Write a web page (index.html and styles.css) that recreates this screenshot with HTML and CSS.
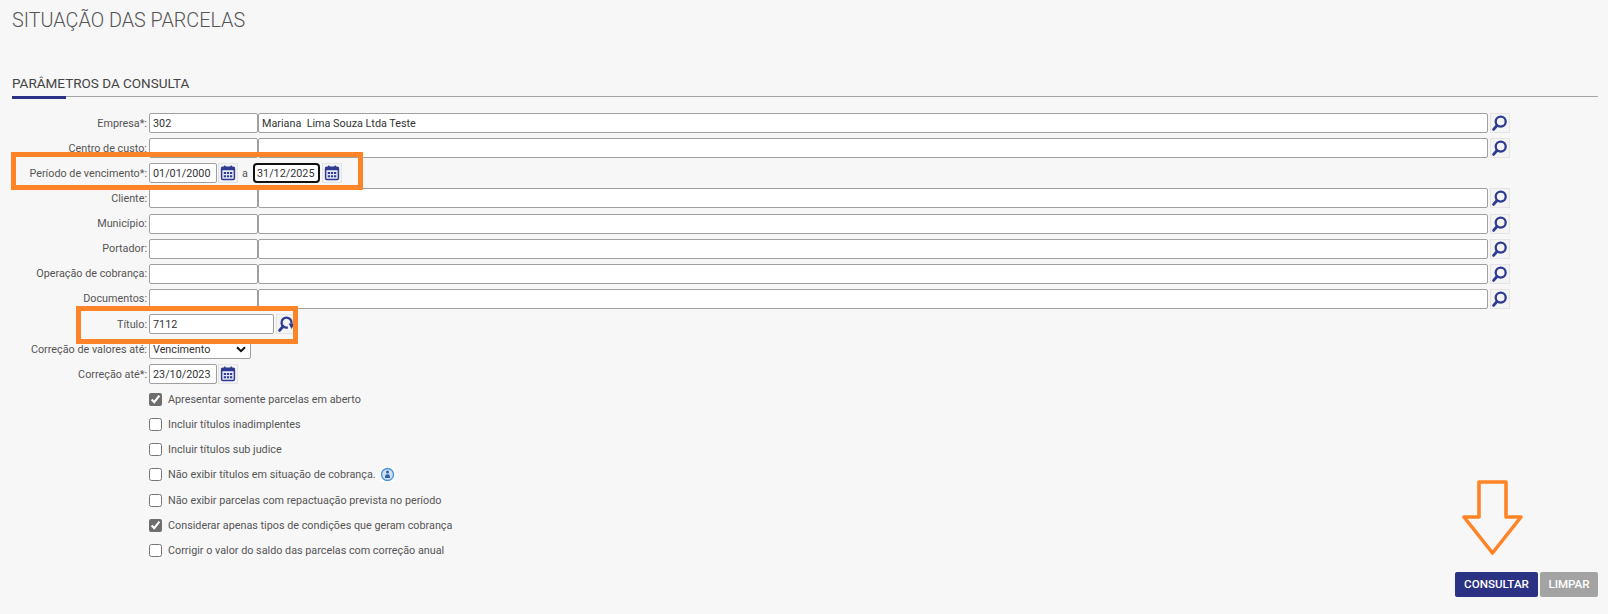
FILE: index.html
```html
<!DOCTYPE html>
<html lang="pt-BR">
<head>
    <meta charset="UTF-8">
    <title>Situação das Parcelas</title>
    <link rel="stylesheet" href="styles.css">
</head>
<body>
    <svg class="icon-defs" width="0" height="0">
        <symbol id="i-search" viewBox="0 0 18 18">
            <circle cx="9.7" cy="7.6" r="5" fill="none" stroke="currentColor" stroke-width="2.3"/>
            <path d="M6 11.5 L2.6 15.4" fill="none" stroke="currentColor" stroke-width="2.8" stroke-linecap="round"/>
        </symbol>
        <symbol id="i-calendar" viewBox="0 0 18 18">
            <rect x="2.6" y="3.2" width="12.8" height="12.2" rx="1.2" fill="#e6e8f5" stroke="currentColor" stroke-width="1.5"/>
            <rect x="2.6" y="3.2" width="12.8" height="3" fill="currentColor"/>
            <rect x="5" y="1.6" width="1.6" height="2.6" fill="currentColor"/>
            <rect x="11.4" y="1.6" width="1.6" height="2.6" fill="currentColor"/>
            <path d="M4.8 8h2.2v2H4.8zM7.9 8h2.2v2H7.9zM11 8h2.2v2H11zM4.8 11.2h2.2v2H4.8zM7.9 11.2h2.2v2H7.9zM11 11.2h2.2v2H11z" fill="currentColor"/>
        </symbol>
    </svg>

    <div class="page">
        <h1 class="page-title">SITUAÇÃO DAS PARCELAS</h1>

        <h2 class="section-title">PARÂMETROS DA CONSULTA</h2>

        <form class="form">
            <div class="row">
                <label class="label">Empresa*:</label>
                <input class="input code" value="302">
                <input class="input grow" value="Mariana  Lima Souza Ltda Teste">
                <button type="button" class="icon-btn"><svg><use href="#i-search"/></svg></button>
            </div>
            <div class="row">
                <label class="label">Centro de custo:</label>
                <input class="input code">
                <input class="input grow">
                <button type="button" class="icon-btn"><svg><use href="#i-search"/></svg></button>
            </div>
            <div class="row">
                <label class="label">Período de vencimento*:</label>
                <input class="input date" value="01/01/2000">
                <button type="button" class="icon-btn"><svg><use href="#i-calendar"/></svg></button>
                <span class="between">a</span>
                <input class="input date focused" value="31/12/2025">
                <button type="button" class="icon-btn"><svg><use href="#i-calendar"/></svg></button>
            </div>
            <div class="row">
                <label class="label">Cliente:</label>
                <input class="input code">
                <input class="input grow">
                <button type="button" class="icon-btn"><svg><use href="#i-search"/></svg></button>
            </div>
            <div class="row">
                <label class="label">Município:</label>
                <input class="input code">
                <input class="input grow">
                <button type="button" class="icon-btn"><svg><use href="#i-search"/></svg></button>
            </div>
            <div class="row">
                <label class="label">Portador:</label>
                <input class="input code">
                <input class="input grow">
                <button type="button" class="icon-btn"><svg><use href="#i-search"/></svg></button>
            </div>
            <div class="row">
                <label class="label">Operação de cobrança:</label>
                <input class="input code">
                <input class="input grow">
                <button type="button" class="icon-btn"><svg><use href="#i-search"/></svg></button>
            </div>
            <div class="row">
                <label class="label">Documentos:</label>
                <input class="input code">
                <input class="input grow">
                <button type="button" class="icon-btn"><svg><use href="#i-search"/></svg></button>
            </div>
            <div class="row">
                <label class="label">Título:</label>
                <input class="input title-code" value="7112">
                <button type="button" class="icon-btn">
                    <svg viewBox="0 0 18 18">
                        <path d="M14.4 8.6 A5 5 0 1 0 10.8 12.4" fill="none" stroke="currentColor" stroke-width="2.3"/>
                        <path d="M6 11.5 L2.6 15.4" fill="none" stroke="currentColor" stroke-width="2.8" stroke-linecap="round"/>
                        <path d="M11.6 8.6 H17.4 L14.6 14 Z" fill="currentColor"/>
                    </svg>
                </button>
            </div>
            <div class="row">
                <label class="label">Correção de valores até:</label>
                <select class="select">
                    <option>Vencimento</option>
                </select>
            </div>
            <div class="row">
                <label class="label">Correção até*:</label>
                <input class="input date" value="23/10/2023">
                <button type="button" class="icon-btn"><svg><use href="#i-calendar"/></svg></button>
            </div>

            <label class="check"><input type="checkbox" checked>Apresentar somente parcelas em aberto</label>
            <label class="check"><input type="checkbox">Incluir títulos inadimplentes</label>
            <label class="check"><input type="checkbox">Incluir títulos sub judice</label>
            <label class="check">
                <input type="checkbox">Não exibir títulos em situação de cobrança.
                <svg class="info" viewBox="0 0 15 15">
                    <rect width="15" height="15" fill="#fff"/>
                    <circle cx="7.5" cy="7.5" r="6" fill="#cfe2f5" stroke="#4f94d8" stroke-width="1.4"/>
                    <circle cx="7.5" cy="5" r="1.5" fill="#2e5f9e"/>
                    <path d="M5 11 V9.5 Q5 7.3 7.5 7.3 Q10 7.3 10 9.5 V11 Z" fill="#2e5f9e"/>
                </svg>
            </label>
            <label class="check"><input type="checkbox">Não exibir parcelas com repactuação prevista no período</label>
            <label class="check"><input type="checkbox" checked>Considerar apenas tipos de condições que geram cobrança</label>
            <label class="check"><input type="checkbox">Corrigir o valor do saldo das parcelas com correção anual</label>
        </form>

        <div class="actions">
            <button type="button" class="btn btn-primary">CONSULTAR</button>
            <button type="button" class="btn btn-muted">LIMPAR</button>
        </div>

        <!-- marcacoes em laranja por cima da tela -->
        <div class="mark mark-periodo"></div>
        <div class="mark mark-titulo"></div>
        <svg class="mark-arrow" viewBox="0 0 66 80">
            <path d="M19 4 H46 V39 H61 L32.5 75 L4 39 H19 Z" fill="none" stroke="#ff8427" stroke-width="3.6" stroke-linejoin="round"/>
        </svg>
    </div>
</body>
</html>
```

FILE: styles.css
```css
* {
    box-sizing: border-box;
}
body {
    margin: 0;
    background: #f7f7f7;
    font-family: Roboto, "Liberation Sans", sans-serif;
    font-size: 10.8px;
    color: #555;
}
.icon-defs {
    position: absolute;
}
.page {
    position: relative;
    height: 614px;
    padding: 10px 10px 0 12px;
    overflow: hidden;
}
.page-title {
    margin: 0;
    font-size: 19.8px;
    line-height: 22px;
    font-weight: 300;
    color: #555;
}
.section-title {
    position: relative;
    margin: 41px 0 0;
    height: 24px;
    font-size: 13.5px;
    line-height: 20px;
    font-weight: 400;
    color: #444;
    border-bottom: 1px solid #a5a5a5;
}
.section-title::after {
    content: "";
    position: absolute;
    left: 0;
    top: 23px;
    width: 54px;
    height: 3px;
    background: #2b3183;
}
.form {
    display: flex;
    flex-direction: column;
    gap: 5.15px;
    margin: 16px 88px 0 0;
}
.row {
    display: flex;
    align-items: center;
    height: 20px;
}
.label {
    width: 135px;
    margin-right: 2px;
    text-align: right;
    white-space: nowrap;
    color: #555;
}
.input {
    height: 20px;
    padding: 0 3px;
    border: 1px solid #a0a0a0;
    border-radius: 2px;
    background: #fff;
    font-family: inherit;
    font-size: 10.8px;
    color: #333;
    outline: none;
}
.code {
    width: 109px;
}
.grow {
    flex: 1;
    min-width: 0;
}
.date {
    width: 68px;
}
.title-code {
    width: 125px;
}
.focused {
    width: 67px;
    border: 2px solid #111;
    border-radius: 4px;
    padding: 0 2px;
}
.between {
    margin: 0 6px 0 4px;
    width: 5px;
}
.select {
    width: 102px;
    height: 19px;
    padding: 0 0 0 3px;
    border: 1px solid #a0a0a0;
    border-radius: 2px;
    background: #fff url("data:image/svg+xml,%3Csvg xmlns='http://www.w3.org/2000/svg' width='10' height='7'%3E%3Cpath d='M1 1.2 L5 5.2 L9 1.2' fill='none' stroke='%23111' stroke-width='2'/%3E%3C/svg%3E") no-repeat right 4px center;
    appearance: none;
    font-family: inherit;
    font-size: 10.8px;
    color: #333;
}
.icon-btn {
    width: 20px;
    height: 20px;
    margin-left: 2px;
    padding: 0;
    border: 1px solid #e4e4e4;
    background: #f4f4f4;
    color: #2f3a92;
    display: flex;
    align-items: center;
    justify-content: center;
}
.date + .icon-btn {
    margin-left: 1px;
}
.focused + .icon-btn {
    margin-left: 2px;
}
.icon-btn svg {
    width: 18px;
    height: 18px;
}
.check {
    display: flex;
    align-items: center;
    height: 20px;
    margin-left: 137px;
    white-space: nowrap;
    color: #555;
}
.check input {
    width: 13px;
    height: 13px;
    margin: 0 6px 0 0;
    accent-color: #6e6e6e;
}
.info {
    width: 15px;
    height: 15px;
    margin-left: 4px;
}
.actions {
    display: flex;
    justify-content: flex-end;
    gap: 2px;
    margin-top: 11.5px;
}
.btn {
    height: 25px;
    padding: 0;
    border: none;
    border-radius: 2px;
    font-family: inherit;
    font-size: 11.6px;
    font-weight: 500;
    color: #fff;
}
.btn-primary {
    width: 83px;
    background: #2b3183;
}
.btn-muted {
    width: 58px;
    background: #a3a3a3;
}
.mark {
    position: absolute;
    border: 5px solid #ff8427;
}
.mark-periodo {
    left: 11px;
    top: 152px;
    width: 352px;
    height: 38px;
}
.mark-titulo {
    left: 76px;
    top: 306px;
    width: 222px;
    height: 38px;
}
.mark-arrow {
    position: absolute;
    left: 1460px;
    top: 478px;
    width: 66px;
    height: 80px;
}
```
